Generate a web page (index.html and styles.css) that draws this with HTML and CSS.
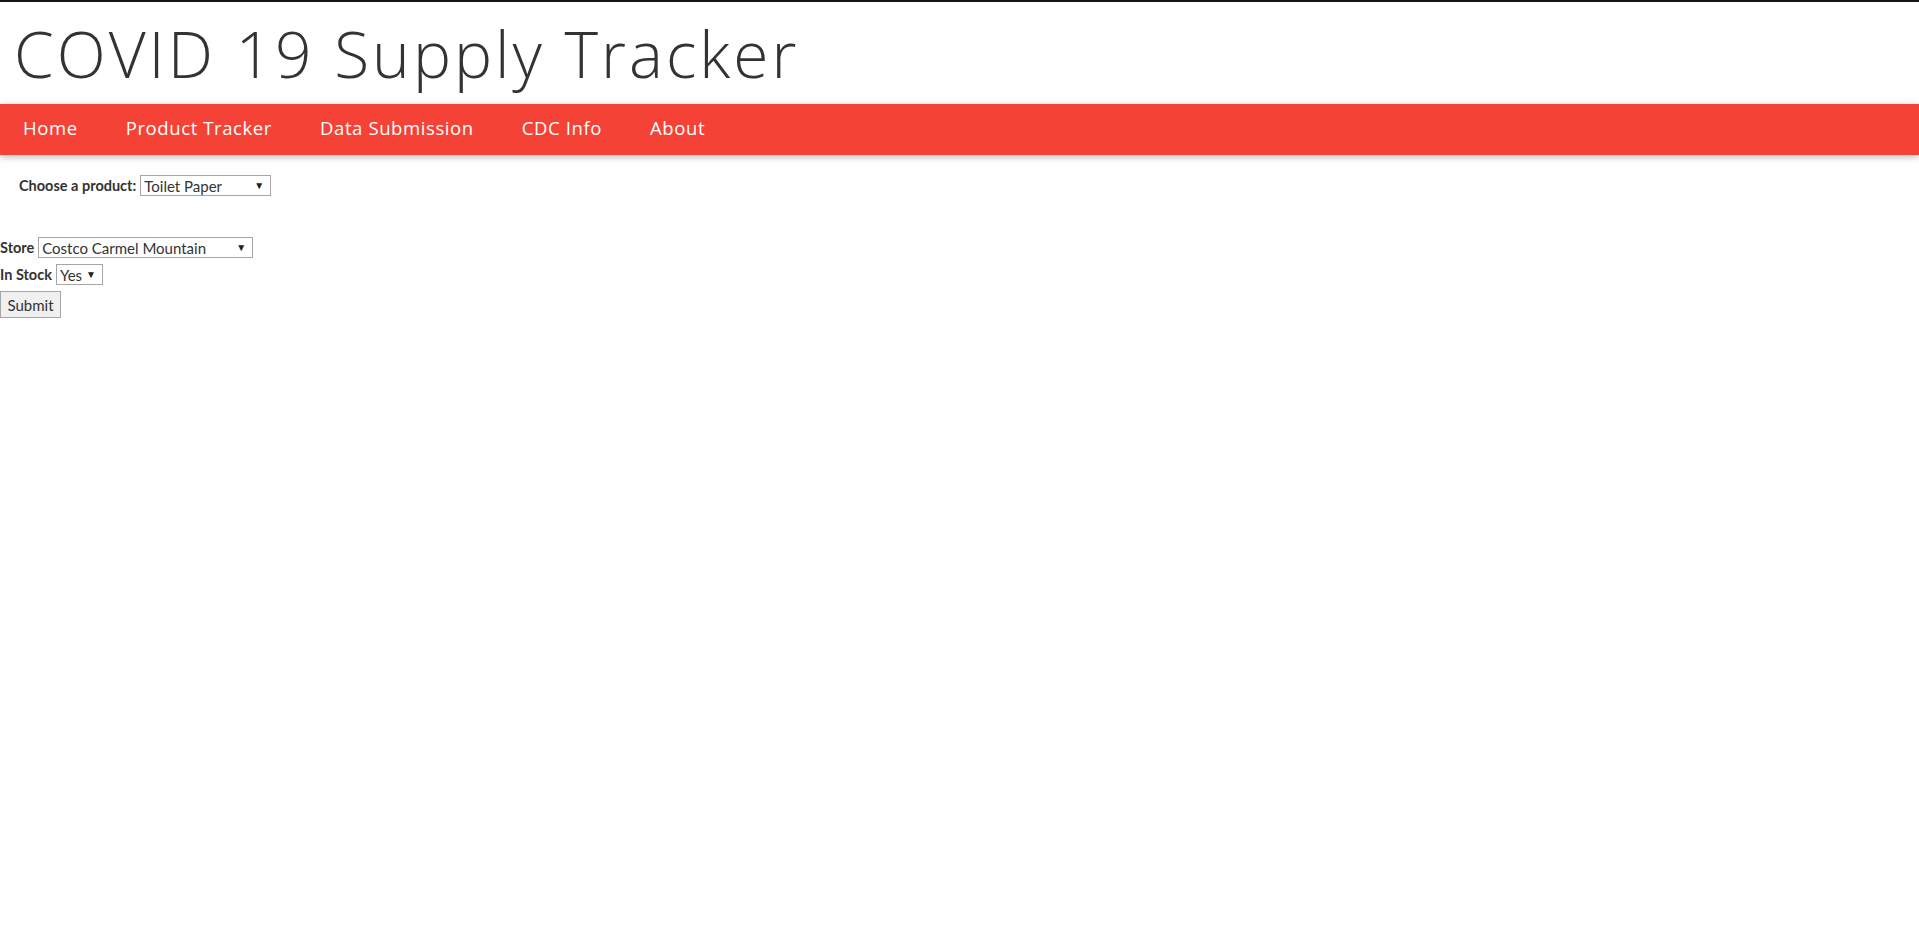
FILE: index.html
```html
<!DOCTYPE html>
<html lang="en">
<head>
<meta charset="utf-8">
<title>COVID 19 Supply Tracker</title>
<link rel="stylesheet" href="styles.css">
</head>
<body>
<header class="masthead">
  <h1 class="title">COVID 19 Supply Tracker</h1>
</header>
<nav class="navbar">
  <a class="nav-link" href="#">Home</a>
  <a class="nav-link" href="#">Product Tracker</a>
  <a class="nav-link" href="#">Data Submission</a>
  <a class="nav-link" href="#">CDC Info</a>
  <a class="nav-link" href="#">About</a>
</nav>
<main class="content">
  <div class="product-row">
    <label class="label" for="product">Choose a product:</label>
    <span class="select-wrap">
      <select id="product" class="select select-product">
        <option>Toilet Paper</option>
      </select>
    </span>
  </div>
  <form class="submit-form">
    <div class="form-row">
      <label class="label" for="store">Store</label>
      <span class="select-wrap">
        <select id="store" class="select select-store">
          <option>Costco Carmel Mountain</option>
        </select>
      </span>
    </div>
    <div class="form-row">
      <label class="label" for="stock">In Stock</label>
      <span class="select-wrap">
        <select id="stock" class="select select-stock">
          <option>Yes</option>
        </select>
      </span>
    </div>
    <div class="button-row">
      <button type="button" class="submit-btn">Submit</button>
    </div>
  </form>
</main>
</body>
</html>
```

FILE: styles.css
```css
* {
  box-sizing: border-box;
}

html, body {
  margin: 0;
  padding: 0;
  background: #ffffff;
}

body {
  font-family: "Lato", "Liberation Sans", sans-serif;
  font-size: 15px;
  color: #333333;
}

.masthead {
  border-top: 2px solid #151515;
  height: 104px;
  display: flex;
  align-items: center;
  padding-left: 14px;
}

.title {
  margin: 0;
  font-family: "Open Sans", "Liberation Sans", sans-serif;
  font-weight: 300;
  font-size: 64px;
  line-height: 1;
  color: #333333;
  letter-spacing: 3px;
  padding-top: 1px;
}

.navbar {
  height: 51px;
  background: #f44336;
  display: flex;
  align-items: center;
  padding-bottom: 3px;
  box-shadow: 0 2px 5px 0 rgba(0, 0, 0, 0.16), 0 2px 10px 0 rgba(0, 0, 0, 0.12);
}

.nav-link {
  color: #ffffff;
  text-decoration: none;
  font-family: "Open Sans", "Liberation Sans", sans-serif;
  font-size: 18.5px;
  letter-spacing: 0.6px;
  padding: 0 24px;
  line-height: 24px;
}

.nav-link:first-child {
  padding-left: 23px;
}

.content {
  padding-top: 17px;
}

.product-row {
  height: 27px;
  display: flex;
  align-items: center;
  padding-left: 19px;
}

.label {
  font-weight: 700;
  font-size: 14.5px;
  margin-right: 4px;
  color: #333333;
}

.select-wrap {
  position: relative;
  display: inline-block;
}

.select-wrap::after {
  content: "\25BC";
  position: absolute;
  right: 7px;
  top: 50%;
  transform: translateY(-55%);
  font-size: 10px;
  color: #222222;
  pointer-events: none;
}

.select {
  appearance: none;
  -webkit-appearance: none;
  display: block;
  height: 21px;
  border: 1px solid #a6a6a6;
  border-radius: 0;
  background: #ffffff;
  font-family: "Lato", "Liberation Sans", sans-serif;
  font-size: 15px;
  color: #333333;
  padding: 0 0 0 3px;
  margin: 0;
}

.select-product {
  width: 131px;
}

.select-store {
  width: 215px;
}

.select-stock {
  width: 47px;
}

.submit-form {
  margin-top: 35px;
}

.form-row {
  height: 27px;
  display: flex;
  align-items: center;
}

.button-row {
  margin-top: 3px;
}

.submit-btn {
  display: block;
  height: 27px;
  width: 61px;
  padding: 0;
  border: 1px solid #a6a6a6;
  border-radius: 0;
  background: #f0f0f0;
  font-family: "Lato", "Liberation Sans", sans-serif;
  font-size: 15px;
  color: #333333;
}
```
